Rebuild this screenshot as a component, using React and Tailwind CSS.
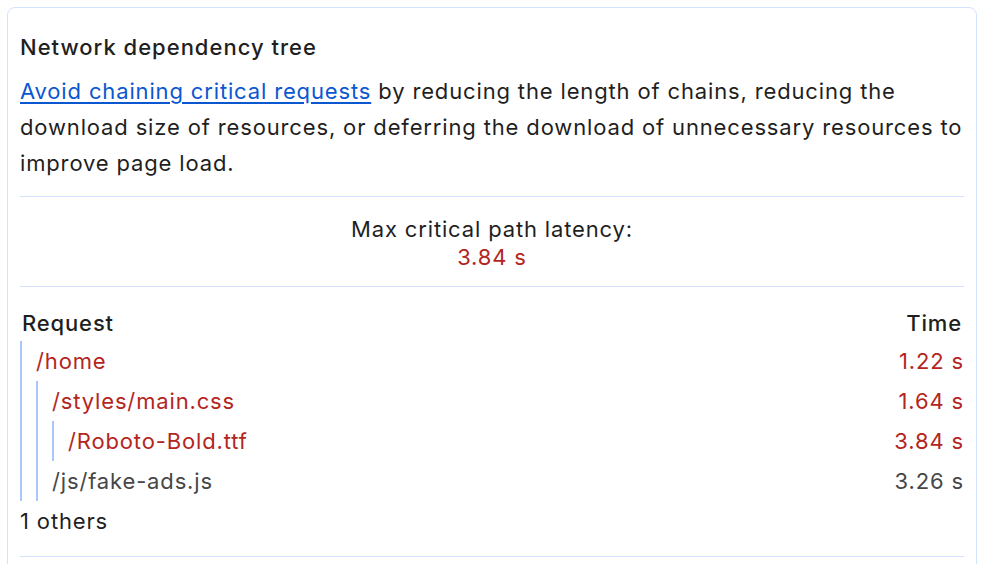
export default function App() {
  const red = "text-[#b3261e]";

  return (
    <div className="min-h-screen bg-white pt-[7px] pl-[7px] pr-[7px] font-['Inter','Liberation_Sans',sans-serif] text-[#1f1f1f] tracking-[0.85px] overflow-hidden">
      <div className="h-[620px] rounded-t-[8px] border border-[#d3e3fd] px-[12px] pt-[25px]">
        <h2 className="text-[22px] leading-[28px] font-medium tracking-[1px]">Network dependency tree</h2>
        <p className="mt-[12px] text-[22px] leading-[36px]">
          <a href="#" className="text-[#0b57d0] underline underline-offset-[3px]">Avoid chaining critical requests</a>{" "}
          by reducing the length of chains, reducing the download size of resources, or deferring the download of unnecessary resources to improve page load.
        </p>

        <div className="mt-[15px] border-t border-[#d3e3fd]" />

        <div className="pt-[18px] pb-[15px] text-center text-[22px] leading-[28px]">
          <div>Max critical path latency:</div>
          <div className={red}>3.84 s</div>
        </div>

        <div className="border-t border-[#d3e3fd]" />

        <div className="mt-[18px] flex justify-between h-[36px] items-center text-[22px] font-medium px-[2px]">
          <span>Request</span>
          <span>Time</span>
        </div>

        <div className="text-[22px]">
          <div className="border-l-2 border-[#a8c7fa]">
            <Row name="/home" time="1.22 s" color={red} />
            <div className="ml-[14px] border-l-2 border-[#a8c7fa]">
              <Row name="/styles/main.css" time="1.64 s" color={red} />
              <div className="ml-[14px] border-l-2 border-[#a8c7fa]">
                <Row name="/Roboto-Bold.ttf" time="3.84 s" color={red} />
              </div>
              <Row name="/js/fake-ads.js" time="3.26 s" color="text-[#474747]" />
            </div>
          </div>
          <div className="h-[40px] flex items-center">1 others</div>
        </div>

        <div className="mt-[15px] border-t border-[#d3e3fd]" />
      </div>
    </div>
  );
}

function Row({ name, time, color }) {
  return (
    <div className={`h-[40px] flex items-center justify-between pl-[14px] ${color}`}>
      <span>{name}</span>
      <span>{time}</span>
    </div>
  );
}
